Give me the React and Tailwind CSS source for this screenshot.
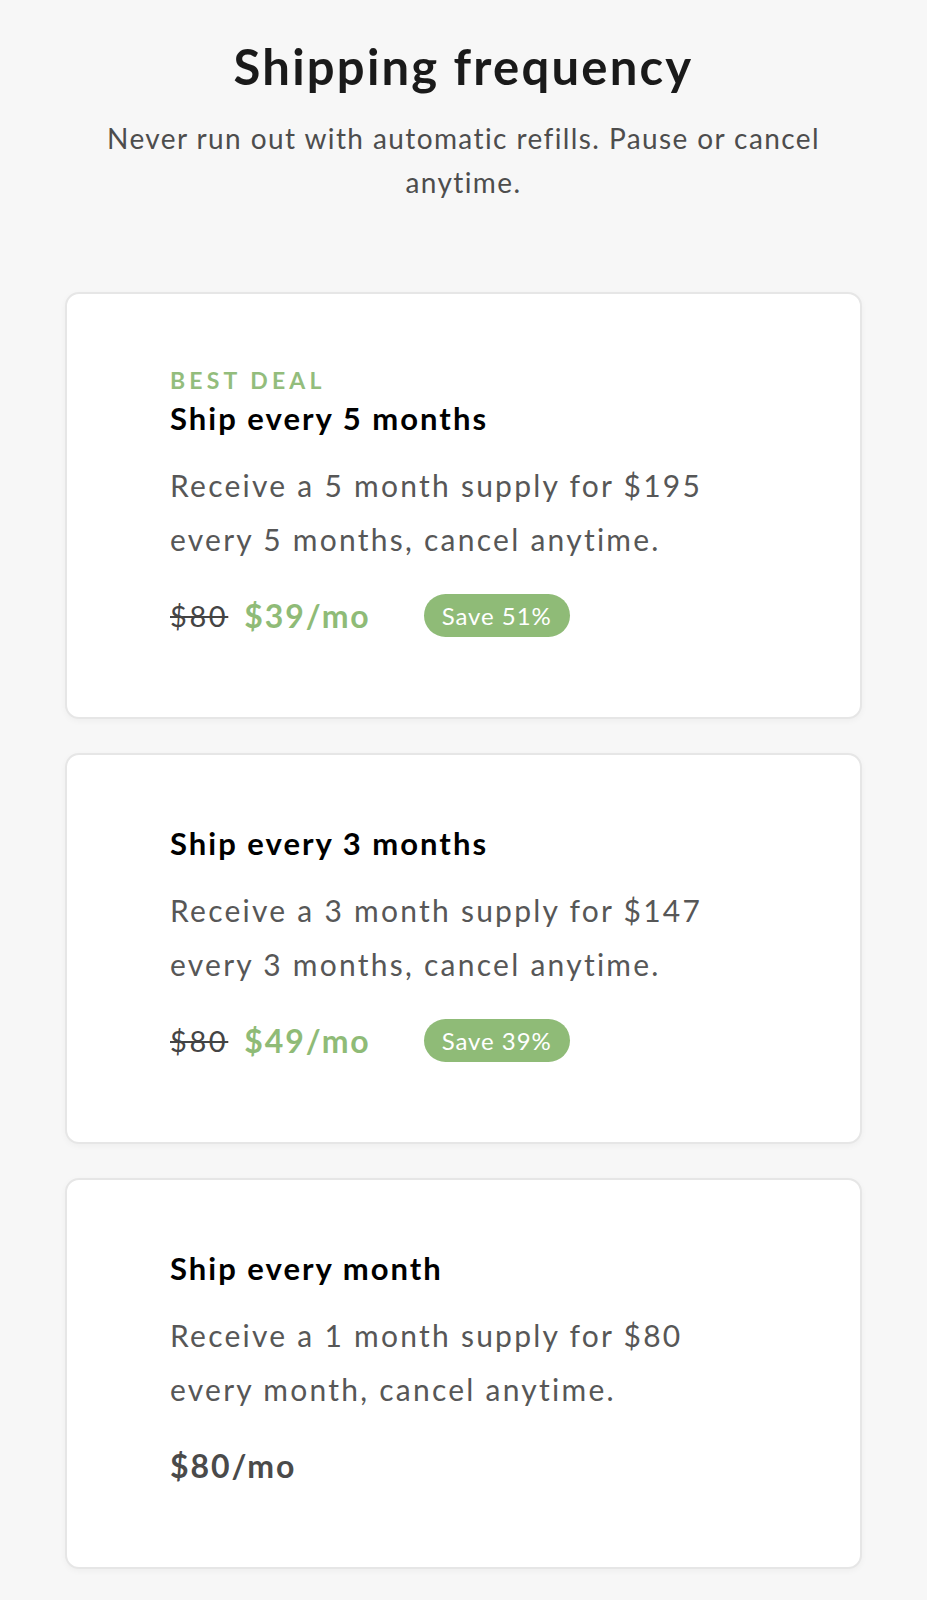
const plans = [
  {
    label: 'BEST DEAL',
    title: 'Ship every 5 months',
    desc: ['Receive a 5 month supply for $195', 'every 5 months, cancel anytime.'],
    was: '$80',
    price: '$39/mo',
    save: 'Save 51%',
  },
  {
    title: 'Ship every 3 months',
    desc: ['Receive a 3 month supply for $147', 'every 3 months, cancel anytime.'],
    was: '$80',
    price: '$49/mo',
    save: 'Save 39%',
  },
  {
    title: 'Ship every month',
    desc: ['Receive a 1 month supply for $80', 'every month, cancel anytime.'],
    price: '$80/mo',
  },
];

const PlanCard = ({ plan }) => (
  <div className="bg-white border-2 border-[#e6e6e6] rounded-[14px] shadow-[0_2px_6px_rgba(0,0,0,0.04)] pl-[103px] pr-8 pt-[68px] pb-[80px]">
    {plan.label && (
      <div className="text-[23px] leading-[36px] font-bold tracking-[0.18em] text-[#93bd7c]">
        {plan.label}
      </div>
    )}
    <h3 className="text-[31px] leading-[40px] font-bold tracking-[0.065em] text-black">{plan.title}</h3>
    <p className="mt-[20px] text-[30px] leading-[54px] text-[#575757] tracking-[0.075em]">
      {plan.desc[0]}
      <br />
      {plan.desc[1]}
    </p>
    <div className="mt-[28px] h-[43px] flex items-center">
      {plan.was ? (
        <>
          <span className="text-[29px] text-[#444] tracking-[0.09em] line-through decoration-[1.5px]">{plan.was}</span>
          <span className="ml-[16px] text-[32px] font-bold tracking-[0.06em] text-[#8fbb77]">{plan.price}</span>
          <span className="ml-[53px] h-[43px] px-[18px] rounded-full bg-[#8fbb77] text-white text-[24px] tracking-[0.04em] flex items-center">
            {plan.save}
          </span>
        </>
      ) : (
        <span className="text-[32px] font-bold tracking-[0.06em] text-[#4a4a4a]">{plan.price}</span>
      )}
    </div>
  </div>
);

export default function App() {
  return (
    <div
      className="min-h-screen bg-[#f7f7f7] px-[65px] pt-[34px] pb-[40px]"
      style={{ fontFamily: 'Lato, "Noto Sans", sans-serif' }}
    >
      <h1 className="text-center text-[49px] leading-[64px] font-bold tracking-[0.045em] text-[#1a1a1a]">
        Shipping frequency
      </h1>
      <p className="mt-[18px] text-center text-[28px] leading-[44px] tracking-[0.05em] text-[#4d4d4d] px-[20px]">
        Never run out with automatic refills. Pause or cancel anytime.
      </p>
      <div className="mt-[88px] flex flex-col gap-[34px]">
        {plans.map((p) => (
          <PlanCard key={p.title} plan={p} />
        ))}
      </div>
    </div>
  );
}
